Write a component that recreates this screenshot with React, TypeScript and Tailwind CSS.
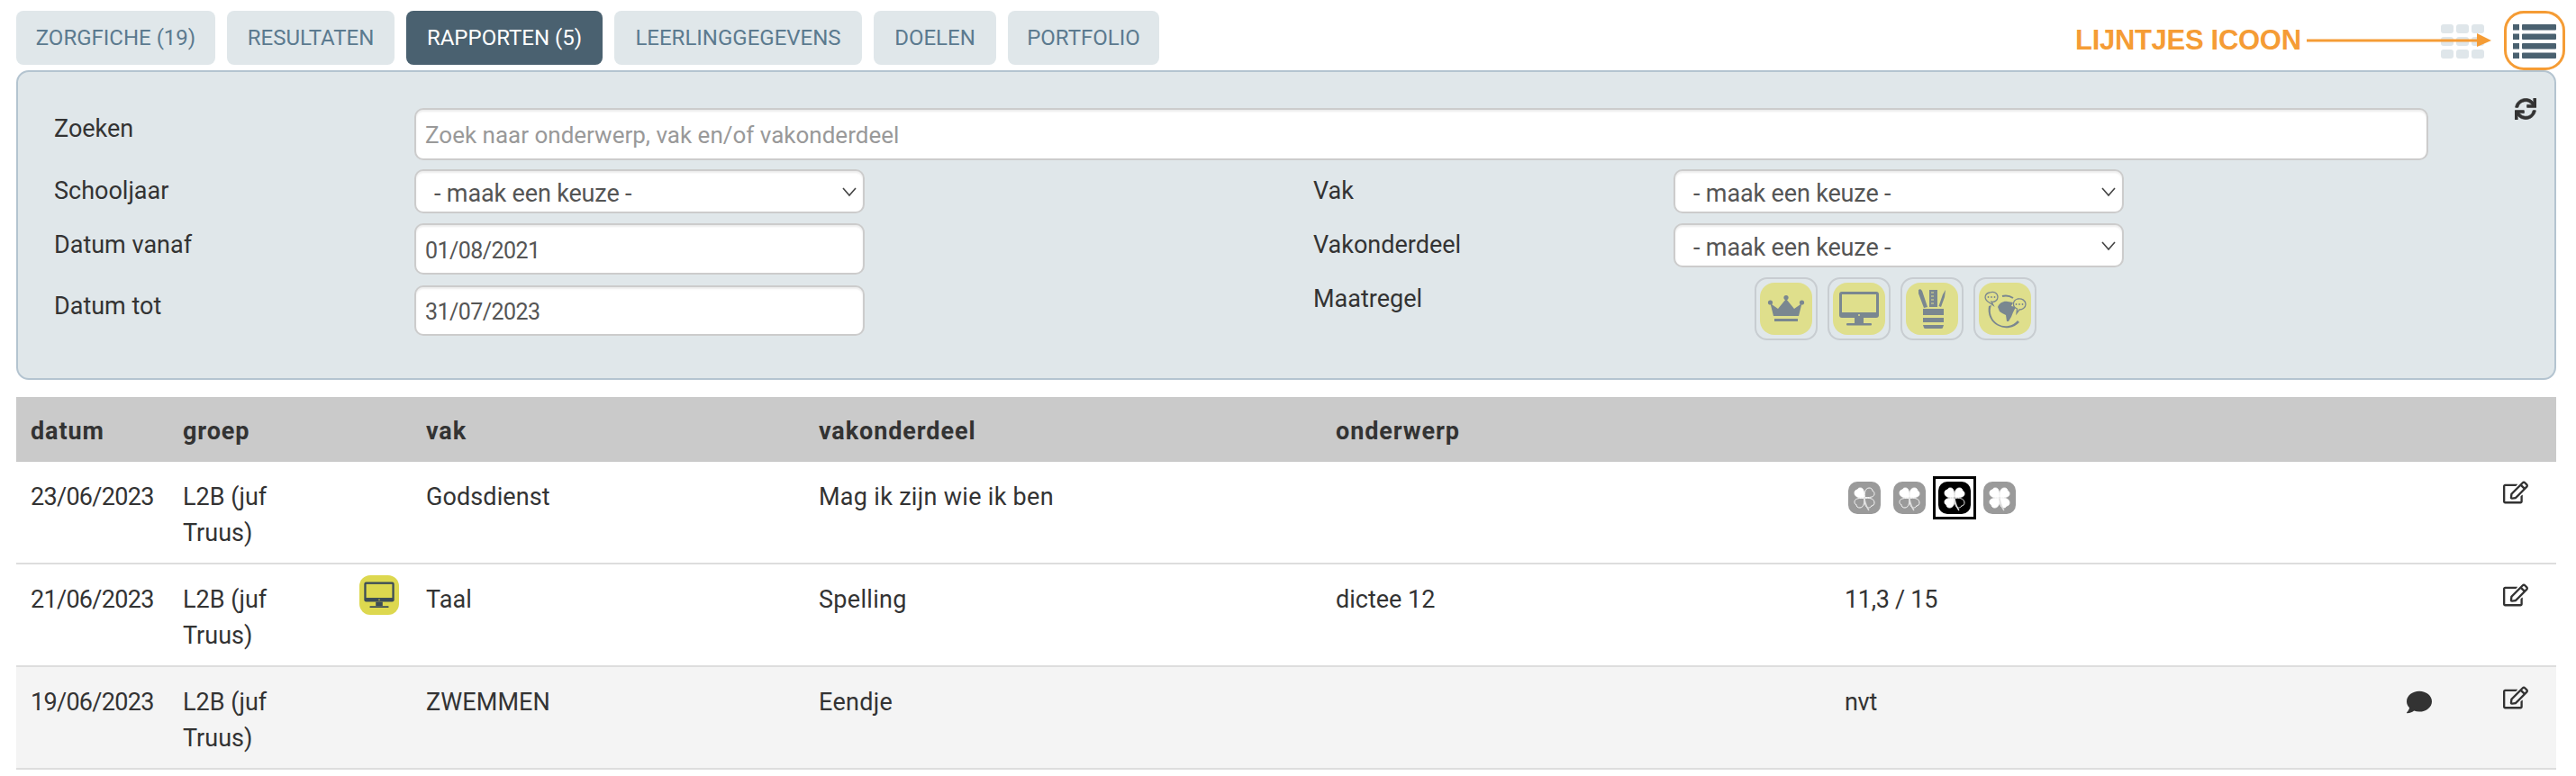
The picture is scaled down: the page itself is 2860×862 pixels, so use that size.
import React from "react";
import { FaSync, FaRegEdit, FaComment } from "react-icons/fa";

const tabs = [
  { label: "ZORGFICHE (19)", w: "w-[221px]" },
  { label: "RESULTATEN", w: "w-[186px]" },
  { label: "RAPPORTEN (5)", w: "w-[218px]", active: true },
  { label: "LEERLINGGEGEVENS", w: "w-[275px]" },
  { label: "DOELEN", w: "w-[136px]" },
  { label: "PORTFOLIO", w: "w-[168px]" },
];

function Select({ className = "" }: { className?: string }) {
  return (
    <div className={"relative w-[500px] h-[49px] rounded-[10px] border-2 border-[#cccccc] bg-white shadow-[inset_0_2px_2px_rgba(0,0,0,0.075)] flex items-center pl-[20px] pt-[4px] tracking-[-0.15px] text-[#555555] " + className}>
      - maak een keuze -
      <svg className="absolute right-[6px] top-[14px]" width="18" height="18" viewBox="0 0 18 18">
        <path d="M2 5l7 8 7-8" fill="none" stroke="#444" strokeWidth="1.6" />
      </svg>
    </div>
  );
}

function DateInput({ value, h }: { value: string; h: string }) {
  return (
    <div className={"w-[500px] rounded-[10px] border-2 border-[#cccccc] bg-white shadow-[inset_0_2px_2px_rgba(0,0,0,0.075)] flex items-center pl-[10px] pt-[4px] text-[25px] tracking-[-0.55px] text-[#555555] " + h}>
      {value}
    </div>
  );
}

function Monitor({ fg, bg }: { fg: string; bg: string }) {
  return (
    <g>
      <rect x="7" y="10" width="44" height="29" rx="3" fill={fg} />
      <rect x="10" y="13" width="38" height="20" fill={bg} />
      <circle cx="29" cy="36" r="1" fill={bg} />
      <rect x="24" y="39" width="10" height="6" fill={fg} />
      <rect x="15" y="45" width="28" height="2.5" rx="1" fill={fg} />
    </g>
  );
}

function Crown({ fg }: { fg: string }) {
  return (
    <g fill={fg}>
      <circle cx="11.5" cy="22" r="2.6" />
      <circle cx="29" cy="16.5" r="2.6" />
      <circle cx="46.5" cy="22" r="2.6" />
      <path d="M11.5 23 L20 29 L29 18 L38 29 L46.5 23 L43 37 L15 37 Z" />
      <rect x="16" y="40" width="26" height="3" />
    </g>
  );
}

function Cup({ fg, bg }: { fg: string; bg: string }) {
  return (
    <g fill={fg}>
      <path d="M14 8 L16 7 L18 9 L24 27 L20 28 L14 12 Z" />
      <path d="M26 8 H35 V27 H26 Z" />
      <path d="M28 11 h3 M28 15 h3 M28 19 h3 M28 23 h3" stroke={bg} strokeWidth="1" />
      <path d="M44 8 L43 16 L39 27 L36.5 26 L41 13 Z" />
      <rect x="19" y="29" width="23" height="7" />
      <rect x="19" y="39" width="23" height="5" />
      <path d="M19 47 H42 L41 50 Q41 51 39 51 H22 Q20 51 20 50 Z" />
    </g>
  );
}

function GlobeTalk({ fg, bg }: { fg: string; bg: string }) {
  return (
    <g>
      <path d="M11 26 A20 20 0 0 0 45 44 L43 42 A17 17 0 0 1 14 25 Z" fill={fg} />
      <path d="M21 27 C23 22 28 20 32 21 L38 22 L36 26 L41 27 L38 33 L36 38 L33 43 L31 43 L30 36 L26 34 L23 32 Z" fill={fg} />
      <path d="M26 15 A15 15 0 0 1 38 17" stroke={fg} strokeWidth="2" fill="none" />
      <path d="M12 11 C17 9 21 12 21 16 C21 20 17 22 14 21 L16 25 L10 21 C5 17 7 12 12 11 Z" fill={bg} stroke={fg} strokeWidth="1.3" />
      <path d="M10.5 16 h.01 M14 16 h.01 M17.5 16 h.01" stroke={fg} strokeWidth="1.8" strokeLinecap="round" />
      <path d="M43 18 C48 17 52 20 52 24 C52 28 48 30 45 30 L42 34 L42.5 29 C37 27 37 20 43 18 Z" fill={bg} stroke={fg} strokeWidth="1.3" />
      <path d="M41.5 24 h.01 M45 24 h.01 M48.5 24 h.01" stroke={fg} strokeWidth="1.8" strokeLinecap="round" />
    </g>
  );
}

function Measure({ children }: { children: React.ReactNode }) {
  return (
    <div className="w-[70px] h-[70px] rounded-[14px] border-2 border-[#c8cdd1] flex items-center justify-center">
      <svg width="58" height="58" viewBox="0 0 58 58">
        <rect width="58" height="58" rx="16" fill="#dfdf8c" />
        {children}
      </svg>
    </div>
  );
}

const leaf = "M17.5 17.5 C14 18 7.5 18 7 13 C6.8 10.5 8.5 9 10.5 9 C10.5 7.5 12 7 13.5 7 C16.5 7 18 10 17.5 17.5 Z";

function Clover({ filled, color }: { filled: boolean[]; color: string }) {
  const rots = [0, 90, 180, 270];
  return (
    <svg width="36" height="36" viewBox="0 0 36 36">
      <rect width="36" height="36" rx="10" fill={color} />
      {rots.map((r, i) => (
        <path
          key={r}
          d={leaf}
          transform={`rotate(${r} 18 18)`}
          fill={filled[i] ? "#fff" : "none"}
          stroke="#fff"
          strokeWidth="0.9"
        />
      ))}
      <path d="M18 19 C19 24 20 28 23 32" fill="none" stroke="#ddd" strokeWidth="1.4" />
    </svg>
  );
}

const cols = "grid grid-cols-[169px_196px_74px_436px_574px_565px_624px_107px_75px]";
const cell = "px-[16px]";

function Row({
  date, icon, vak, deel, onderwerp, result, comment, last,
}: {
  date: string; icon?: boolean; vak: string; deel: string; onderwerp?: string;
  result: React.ReactNode; comment?: boolean; last?: boolean;
}) {
  return (
    <div className={cols + " h-[114px] border-b-2 border-[#dddddd] pt-[19px] " + (last ? "bg-[#f4f4f4]" : "bg-white")}>
      <div className={cell + " tracking-[-0.7px]"}>{date}</div>
      <div className={cell}>L2B (juf<br />Truus)</div>
      <div className={cell}>
        {icon && (
          <svg className="mt-[-7px]" width="44" height="44" viewBox="0 0 58 58">
            <rect width="58" height="58" rx="16" fill="#ddd84f" />
            <Monitor fg="#3c4c57" bg="#ddd84f" />
          </svg>
        )}
      </div>
      <div className={cell + " tracking-[0.1px]"}>{vak}</div>
      <div className={cell + " tracking-[0.3px]"}>{deel}</div>
      <div className={cell}>{onderwerp}</div>
      <div className={cell + " tracking-[-0.3px]"}>{result}</div>
      <div className={cell}>
        {comment && <FaComment className="text-[28px] mt-[6px] text-[#333]" />}
      </div>
      <div className={cell}>
        <FaRegEdit className="text-[28px] mt-[1px] text-[#333]" />
      </div>
    </div>
  );
}

export default function App() {
  return (
    <div className="relative w-[2860px] h-[862px] bg-white pl-[18px] pr-[22px] font-['Roboto',sans-serif] text-[27px] leading-[40px] text-[#333333] overflow-hidden">
      {/* Top bar */}
      <div className="flex pt-[12px]">
        <div className="flex gap-[13px]">
          {tabs.map((t) => (
            <div
              key={t.label}
              className={
                "h-[60px] rounded-[8px] flex items-center justify-center text-[24px] " + t.w + " " +
                (t.active ? "bg-[#4a6170] text-white" : "bg-[#e0e7ea] text-[#5b7a8f]")
              }
            >
              {t.label}
            </div>
          ))}
        </div>
        <div className="ml-auto mt-[15px] flex gap-[32px]">
          <svg width="48" height="38" viewBox="0 0 48 38" fill="#dfe6ea">
            {[0, 14, 28].map((y) =>
              [0, 17, 34].map((x) => <rect key={`${x}-${y}`} x={x} y={y} width="14" height="10" rx="3" />)
            )}
          </svg>
          <svg width="48" height="38" viewBox="0 0 48 38" fill="#4a6170">
            {[0, 10.5, 21, 31.5].map((y) => (
              <g key={y}>
                <rect x="0" y={y} width="7" height="6.5" />
                <rect x="10" y={y} width="38" height="6.5" rx="1" />
              </g>
            ))}
          </svg>
        </div>
      </div>

      {/* Filter panel */}
      <div className="mt-[6px] rounded-[14px] border-2 border-[#b4c4d0] bg-[#e0e7ea] pt-[40px] pb-[42px] pl-[40px]">
        <div className="flex">
          <div className="w-[400px] pt-[3px]">Zoeken</div>
          <div className="w-[2236px] h-[58px] rounded-[10px] border-2 border-[#cccccc] bg-white shadow-[inset_0_2px_2px_rgba(0,0,0,0.075)] flex items-center pl-[10px] pt-[2px] text-[#999999] text-[26px]">
            Zoek naar onderwerp, vak en/of vakonderdeel
          </div>
          <FaSync className="ml-[96px] mt-[-11px] text-[24px] text-[#333]" stroke="currentColor" strokeWidth={12} />
        </div>
        <div className="flex mt-[10px]">
          <div className="w-[900px]">
            <div className="flex">
              <div className="w-[400px] pt-[4px]">Schooljaar</div>
              <Select />
            </div>
            <div className="flex mt-[11px]">
              <div className="w-[400px] pt-[4px]">Datum vanaf</div>
              <DateInput value="01/08/2021" h="h-[57px]" />
            </div>
            <div className="flex mt-[12px]">
              <div className="w-[400px] pt-[3px]">Datum tot</div>
              <DateInput value="31/07/2023" h="h-[56px]" />
            </div>
          </div>
          <div className="ml-[498px]">
            <div className="flex">
              <div className="w-[400px] pt-[4px]">Vak</div>
              <Select />
            </div>
            <div className="flex mt-[11px]">
              <div className="w-[400px] pt-[4px]">Vakonderdeel</div>
              <Select />
            </div>
            <div className="flex mt-[11px]">
              <div className="w-[490px] pt-[4px]">Maatregel</div>
              <div className="flex gap-[11px]">
                <Measure><Crown fg="#7a8790" /></Measure>
                <Measure><Monitor fg="#7a8790" bg="#dfdf8c" /></Measure>
                <Measure><Cup fg="#7a8790" bg="#dfdf8c" /></Measure>
                <Measure><GlobeTalk fg="#7a8790" bg="#dfdf8c" /></Measure>
              </div>
            </div>
          </div>
        </div>
      </div>

      {/* Table */}
      <div className="mt-[19px]">
        <div className={cols + " h-[72px] bg-[#cacaca] pt-[18px] font-bold tracking-[0.9px]"}>
          <div className={cell}>datum</div>
          <div className={cell}>groep</div>
          <div className={cell}></div>
          <div className={cell}>vak</div>
          <div className={cell}>vakonderdeel</div>
          <div className={cell}>onderwerp</div>
        </div>
        <Row
          date="23/06/2023"
          vak="Godsdienst"
          deel="Mag ik zijn wie ik ben"
          result={
            <div className="flex gap-[14px] mt-[3px] ml-[4px]">
              <Clover color="#9a9a9a" filled={[true, false, false, false]} />
              <Clover color="#9a9a9a" filled={[true, true, false, false]} />
              <div className="relative">
                <Clover color="#000000" filled={[true, true, false, true]} />
                <div className="absolute -inset-[6px] border-[3px] border-black"></div>
              </div>
              <Clover color="#9a9a9a" filled={[true, true, true, true]} />
            </div>
          }
        />
        <Row date="21/06/2023" icon vak="Taal" deel="Spelling" onderwerp="dictee 12" result="11,3 / 15" />
        <Row date="19/06/2023" vak="ZWEMMEN" deel="Eendje" result="nvt" comment last />
      </div>

      {/* Annotation laid over the screenshot */}
      <div className="absolute left-[2304px] top-[24px] font-['Liberation_Sans',sans-serif] font-bold text-[31px] tracking-[-0.3px] leading-[42px] text-[#f59c35] whitespace-nowrap">
        LIJNTJES ICOON
      </div>
      <svg className="absolute left-[2560px] top-[30px]" width="210" height="30" viewBox="0 0 210 30">
        <path d="M1 15 H192" stroke="#f59c35" strokeWidth="3" />
        <path d="M190 7 L206 15 L190 22 Z" fill="#f59c35" />
      </svg>
      <div className="absolute left-[2780px] top-[12px] w-[68px] h-[66px] rounded-[22px] border-[3px] border-[#f59c35]"></div>
    </div>
  );
}
